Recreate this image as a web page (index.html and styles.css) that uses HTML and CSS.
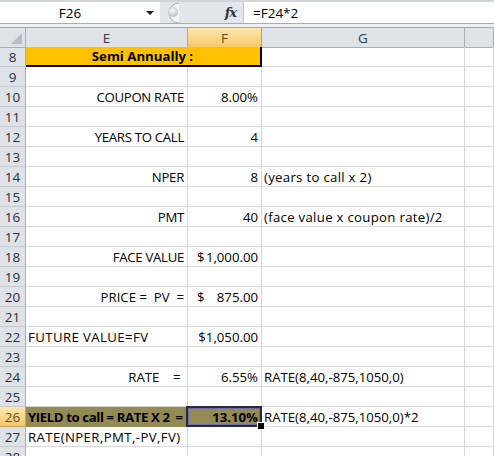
FILE: index.html
```html
<!DOCTYPE html>
<html>
<head>
<meta charset="utf-8">
<link rel="stylesheet" href="styles.css">
</head>
<body>
<div class="fbar">
  <div class="namebox"><span class="nb-text">F26</span><span class="arrow"></span></div>
  <div class="fsep">
    <svg class="grip" width="20" height="22" viewBox="0 0 20 22">
      <defs>
        <radialGradient id="g" cx="0.45" cy="0.4" r="0.6">
          <stop offset="0" stop-color="#ffffff"/>
          <stop offset="1" stop-color="#b9bcc2"/>
        </radialGradient>
      </defs>
      <path d="M19 1 A10 10 0 0 0 19 21" fill="#f3f4f6" stroke="#a9adb4" stroke-width="1"/>
      <circle cx="13" cy="10" r="5" fill="url(#g)"/>
    </svg>
    <span class="fx">fx</span>
  </div>
  <div class="finput">=F24*2</div>
</div>
<div class="strip"></div>
<div class="sheet">
  <div class="row hdr">
    <div class="corner"><span class="tri"></span></div>
    <div class="ch">E</div>
    <div class="ch sel">F</div>
    <div class="ch">G</div>
    <div class="ch"></div>
  </div>
  <div class="row">
    <div class="rh">8</div>
    <div class="c merged orange center bold">Semi Annually :</div>
    <div class="c"></div>
    <div class="c"></div>
  </div>
  <div class="row"><div class="rh">9</div><div class="c"></div><div class="c"></div><div class="c"></div><div class="c"></div></div>
  <div class="row"><div class="rh">10</div><div class="c right caps">COUPON RATE</div><div class="c right">8.00%</div><div class="c"></div><div class="c"></div></div>
  <div class="row"><div class="rh">11</div><div class="c"></div><div class="c"></div><div class="c"></div><div class="c"></div></div>
  <div class="row"><div class="rh">12</div><div class="c right caps">YEARS TO CALL</div><div class="c right">4</div><div class="c"></div><div class="c"></div></div>
  <div class="row"><div class="rh">13</div><div class="c"></div><div class="c"></div><div class="c"></div><div class="c"></div></div>
  <div class="row"><div class="rh">14</div><div class="c right caps">NPER</div><div class="c right">8</div><div class="c left lower">(years to call x 2)</div><div class="c"></div></div>
  <div class="row"><div class="rh">15</div><div class="c"></div><div class="c"></div><div class="c"></div><div class="c"></div></div>
  <div class="row"><div class="rh">16</div><div class="c right caps">PMT</div><div class="c right">40</div><div class="c left lower">(face value x coupon rate)/2</div><div class="c"></div></div>
  <div class="row"><div class="rh">17</div><div class="c"></div><div class="c"></div><div class="c"></div><div class="c"></div></div>
  <div class="row"><div class="rh">18</div><div class="c right caps">FACE VALUE</div><div class="c acct"><span>$</span><span>1,000.00</span></div><div class="c"></div><div class="c"></div></div>
  <div class="row"><div class="rh">19</div><div class="c"></div><div class="c"></div><div class="c"></div><div class="c"></div></div>
  <div class="row"><div class="rh">20</div><div class="c right">PRICE =&nbsp; PV&nbsp; =</div><div class="c acct"><span>$</span><span>875.00</span></div><div class="c"></div><div class="c"></div></div>
  <div class="row"><div class="rh">21</div><div class="c"></div><div class="c"></div><div class="c"></div><div class="c"></div></div>
  <div class="row"><div class="rh">22</div><div class="c left wide">FUTURE VALUE=FV</div><div class="c right">$1,050.00</div><div class="c"></div><div class="c"></div></div>
  <div class="row"><div class="rh">23</div><div class="c"></div><div class="c"></div><div class="c"></div><div class="c"></div></div>
  <div class="row"><div class="rh">24</div><div class="c right">RATE&nbsp;&nbsp;&nbsp; =&nbsp;</div><div class="c right">6.55%</div><div class="c left">RATE(8,40,-875,1050,0)</div><div class="c"></div></div>
  <div class="row"><div class="rh">25</div><div class="c"></div><div class="c"></div><div class="c"></div><div class="c"></div></div>
  <div class="row"><div class="rh selrow">26</div><div class="c left olive bold tight">YIELD to call = RATE X 2&nbsp; =</div><div class="c right olive bold active">13.10%</div><div class="c left">RATE(8,40,-875,1050,0)*2</div><div class="c"></div></div>
  <div class="row"><div class="rh">27</div><div class="c left wide">RATE(NPER,PMT,-PV,FV)</div><div class="c"></div><div class="c"></div><div class="c"></div></div>
  <div class="row"><div class="rh">28</div><div class="c"></div><div class="c"></div><div class="c"></div><div class="c"></div></div>
</div>
</body>
</html>
```
FILE: styles.css
```css
* { box-sizing: border-box; }
html, body { margin: 0; padding: 0; background: #fff; }
body {
  width: 494px;
  height: 456px;
  overflow: hidden;
  font-family: "Open Sans", Lato, sans-serif;
  font-size: 13.2px;
  color: #000;
}
.fbar {
  display: flex;
  height: 24px;
  border-top: 2px solid #d2d5da;
  border-bottom: 1px solid #a9adb3;
  background: #fff;
}
.namebox {
  width: 160px;
  position: relative;
  display: flex;
  align-items: center;
  justify-content: center;
  padding-right: 20px;
  color: #000;
  font-size: 13.5px;
}
.arrow {
  position: absolute;
  right: 6px;
  top: 9px;
  width: 0; height: 0;
  border-left: 4px solid transparent;
  border-right: 4px solid transparent;
  border-top: 4px solid #222;
}
.fsep {
  width: 84px;
  background: #e3e6ea;
  display: flex;
  align-items: center;
  justify-content: space-between;
  border-right: 1px solid #c3c7cc;
}
.grip { display: block; }
.fx {
  font-family: "DejaVu Serif", serif;
  font-style: italic;
  font-weight: bold;
  font-size: 13px;
  letter-spacing: -1px;
  margin-right: 7px;
  color: #333;
}
.finput {
  flex: 1;
  display: flex;
  align-items: center;
  padding-left: 9px;
  font-size: 13.5px;
}
.strip {
  height: 4px;
  background: #eef0f3;
  border-bottom: 1px solid #a7abb1;
}
.sheet { display: flex; flex-direction: column; }
.row {
  display: grid;
  grid-template-columns: 26px 162px 74px 203px 29px;
  height: 20px;
}
.row.hdr { height: 19px; }
.corner, .ch, .rh {
  background: #dfe3e8;
  color: #2c3e50;
  display: flex;
  align-items: center;
  justify-content: center;
  border-right: 1px solid #a9adb3;
  border-bottom: 1px solid #a9adb3;
  font-size: 13.5px;
}
.rh { border-bottom: 1px solid #c5c9cf; padding-top: 1px; color: #1f2f44; }
.corner { position: relative; }
.tri {
  position: absolute;
  right: 3px;
  bottom: 3px;
  width: 0; height: 0;
  border-left: 11px solid transparent;
  border-bottom: 11px solid #b7bcc3;
}
.ch.sel, .rh.selrow {
  background: linear-gradient(#fbe7ad, #f6c86a);
  color: #6b4a1c;
  border-right-color: #c2a05a;
  border-bottom-color: #c2a05a;
}
.ch { padding-top: 1px; }
.c {
  border-right: 1px solid #d9d9d9;
  border-bottom: 1px solid #d9d9d9;
  display: flex;
  align-items: flex-end;
  padding: 0 3px 0 2px;
  line-height: 18px;
  white-space: nowrap;
  overflow: visible;
}
.right { justify-content: flex-end; }
.left { justify-content: flex-start; }
.center { justify-content: center; }
.bold { font-weight: bold; }
.caps { letter-spacing: -0.3px; }
.lower { letter-spacing: 0.3px; }
.wide { letter-spacing: 0.4px; }
.tight { letter-spacing: -0.4px; }
.merged { grid-column: span 2; }
.orange {
  background: #ffc000;
  border-right: 2px solid #000;
  border-bottom: 2px solid #000;
  line-height: 17px;
}
.olive {
  background: #948a54;
  border-right-color: #948a54;
  border-bottom-color: #948a54;
}
.acct { justify-content: space-between; padding-left: 9px; }
.active { position: relative; }
.active::after {
  content: "";
  position: absolute;
  left: -2px;
  top: -1px;
  right: -1px;
  bottom: -1px;
  border: 2px solid #2a2a3a;
  box-shadow: inset 0 0 0 1px #6e6e9c;
}
.active::before {
  content: "";
  position: absolute;
  right: -4px;
  bottom: -4px;
  width: 6px;
  height: 6px;
  background: #000;
  border: 1px solid #fff;
  z-index: 2;
}
```
